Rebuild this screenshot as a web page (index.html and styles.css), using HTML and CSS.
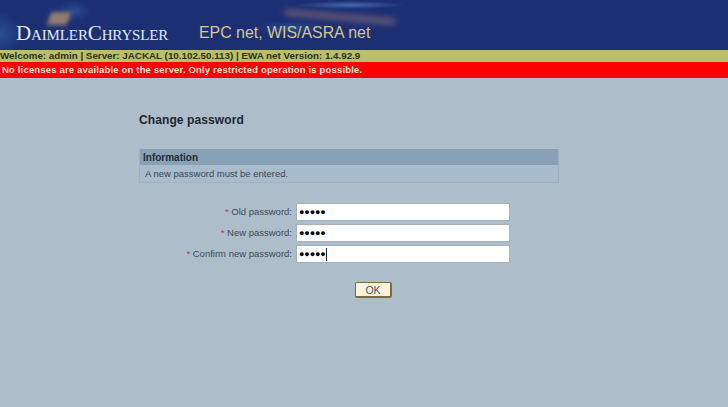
FILE: index.html
```html
<!DOCTYPE html>
<html lang="en">
<head>
  <meta charset="UTF-8" />
  <title>Change password</title>
  <link rel="stylesheet" href="styles.css">
</head>
<body>

  <div class="banner">
    <span class="brand">DaimlerChrysler</span>
    <span class="product">EPC net, WIS/ASRA net</span>
  </div>
  <div class="status-bar">Welcome: admin | Server: JACKAL (10.102.50.113) | EWA net Version: 1.4.92.9</div>
  <div class="alert-bar">No licenses are available on the server. Only restricted operation is possible.</div>

  <div class="content">
    <h2>Change password</h2>

    <div class="info-box">
      <div class="info-head">Information</div>
      <div class="info-text">A new password must be entered.</div>
    </div>

    <form class="pw-form">
      <div class="row">
        <label><span class="req">*</span> Old password:</label>
        <div class="field">●●●●●</div>
      </div>
      <div class="row">
        <label><span class="req">*</span> New password:</label>
        <div class="field">●●●●●</div>
      </div>
      <div class="row">
        <label><span class="req">*</span> Confirm new password:</label>
        <div class="field">●●●●●<span class="caret"></span></div>
      </div>
      <div class="actions">
        <button type="button">OK</button>
      </div>
    </form>
  </div>

</body>
</html>
```

FILE: styles.css
```css
body {
  margin: 0;
  height: 407px;
  overflow: hidden;
  font-family: "Liberation Sans", Arial, sans-serif;
  background: #adbdca;
  color: #26323c;
}

.banner {
  position: relative;
  overflow: hidden;
  height: 50px;
  display: flex;
  align-items: flex-end;
  padding-left: 16px;
  box-sizing: border-box;
  padding-bottom: 7px;
  background:
    radial-gradient(ellipse 55px 4px at 50% 50%, rgba(80, 125, 195, 0.75), transparent) 295px 0 / 110px 10px no-repeat,
    radial-gradient(ellipse 35px 7px at 50% 50%, rgba(50, 95, 170, 0.6), transparent) 255px 20px / 70px 16px no-repeat,
    radial-gradient(ellipse 16px 11px at 50% 50%, rgba(50, 90, 165, 0.65), transparent) 58px 0 / 32px 22px no-repeat,
    radial-gradient(ellipse 22px 22px at 0 68%, rgba(50, 100, 170, 0.6), transparent) 0 0 / 30px 50px no-repeat,
    #1c2f72;
}

/* soft light shapes in the banner picture */
.banner::before {
  content: "";
  position: absolute;
  left: 49px;
  top: 12px;
  width: 20px;
  height: 13px;
  background: #8f7c70;
  transform: skewX(-18deg);
  filter: blur(2px);
}

.banner::after {
  content: "";
  position: absolute;
  left: 285px;
  top: 14px;
  width: 110px;
  height: 6px;
  background: rgba(168, 125, 120, 0.55);
  transform: rotate(5deg);
  filter: blur(3px);
}

.brand {
  position: relative;
  z-index: 1;
  font-family: "Liberation Serif", "Times New Roman", serif;
  font-variant: small-caps;
  font-size: 21px;
  line-height: 20px;
  letter-spacing: -0.13px;
  color: #e6eaf6;
  width: 183px;
}

.product {
  position: relative;
  z-index: 1;
  font-size: 15.9px;
  line-height: 20px;
  color: #d3c88e;
}

.status-bar {
  height: 12px;
  line-height: 12px;
  font-size: 9.8px;
  font-weight: bold;
  color: #2a3318;
  background: #bdbd6e;
  white-space: nowrap;
}

.alert-bar {
  height: 16px;
  line-height: 16px;
  padding-left: 2px;
  font-size: 9.5px;
  font-weight: bold;
  letter-spacing: 0.17px;
  color: #ffe4dc;
  background: #fe0000;
  white-space: nowrap;
}

.content {
  width: 420px;
  margin-left: 139px;
  padding-top: 34px;
}

.content h2 {
  margin: 0 0 21px;
  font-size: 12px;
  line-height: 16px;
  letter-spacing: 0.1px;
  color: #1d2731;
}

.info-box {
  border: 1px solid #a0b2c1;
  border-top: 0;
  background: #a9bccd;
}

.info-head {
  height: 16px;
  line-height: 17px;
  padding-left: 3px;
  font-size: 10px;
  font-weight: bold;
  color: #1f2c38;
  background: #88a1b5;
}

.info-text {
  height: 17px;
  line-height: 18px;
  padding-left: 5px;
  font-size: 9.5px;
  color: #3a4650;
}

.pw-form {
  margin-top: 21px;
  display: flex;
  flex-direction: column;
  gap: 5px;
}

.row {
  display: flex;
  align-items: center;
  gap: 5px;
  height: 16px;
}

.row label {
  width: 153px;
  padding-bottom: 1px;
  text-align: right;
  font-size: 9.5px;
  color: #3d4953;
}

.req {
  color: #c43a52;
}

.field {
  width: 212px;
  height: 16px;
  box-sizing: border-box;
  padding-left: 2px;
  display: flex;
  align-items: center;
  background: #fff;
  box-shadow: 0 0 0 1px #a3b1bd;
  font-size: 9px;
  letter-spacing: -0.1px;
  color: #000;
}

.caret {
  width: 1px;
  height: 13px;
  background: #222;
}

.actions {
  margin-top: 15px;
  padding-left: 216px;
  display: flex;
}

.actions button {
  width: 37px;
  height: 16px;
  padding: 0;
  box-sizing: border-box;
  border: 1px solid #7a6a3c;
  border-right-width: 2px;
  border-bottom-width: 2px;
  border-radius: 2px;
  background: #fbf3dc;
  font-family: inherit;
  font-size: 10.5px;
  color: #4a5560;
}
```
